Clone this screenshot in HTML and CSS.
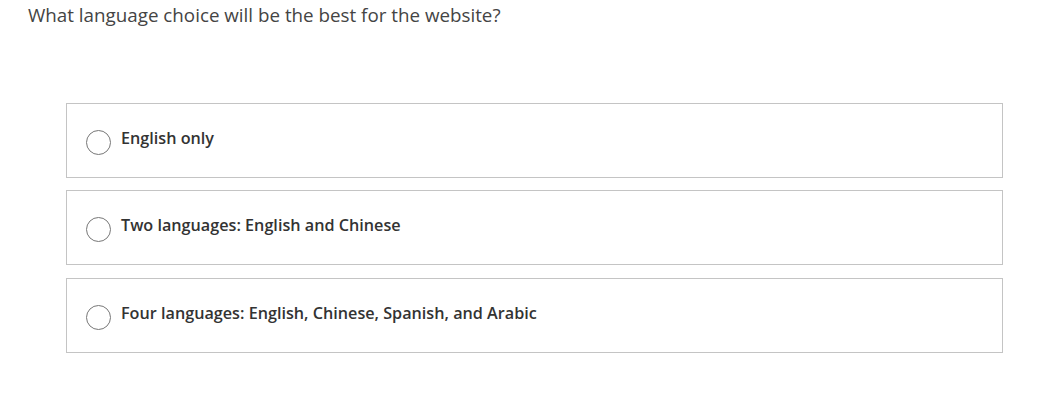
FILE: index.html
```html
<!DOCTYPE html>
<html>
<head>
<meta charset="utf-8">
<link rel="stylesheet" href="styles.css">
</head>
<body>
<div class="question">
  <h1 class="prompt">What language choice will be the best for the website?</h1>
  <div class="options">
    <label class="option"><span class="radio"></span><span class="label">English only</span></label>
    <label class="option"><span class="radio"></span><span class="label">Two languages: English and Chinese</span></label>
    <label class="option"><span class="radio"></span><span class="label">Four languages: English, Chinese, Spanish, and Arabic</span></label>
  </div>
</div>
</body>
</html>
```
FILE: styles.css
```css
html, body {
  margin: 0;
  padding: 0;
  background: #fff;
}
body {
  font-family: "Open Sans", "Liberation Sans", sans-serif;
}
.question {
  padding: 2px 52px 0 28px;
}
.prompt {
  margin: 0;
  font-size: 18.8px;
  font-weight: 400;
  color: #444;
  line-height: 26px;
}
.options {
  margin: 75px 0 0 38px;
  display: flex;
  flex-direction: column;
  gap: 12px;
}
.option {
  display: flex;
  align-items: center;
  height: 73px;
  border: 1px solid #c4c4c4;
  padding: 0 0 0 19px;
  gap: 10px;
}
.option:last-child {
  margin-top: 1px;
}
.radio {
  width: 23px;
  height: 23px;
  border: 1px solid #777;
  border-radius: 50%;
  flex: none;
  margin-top: 3px;
}
.label {
  font-size: 16.2px;
  font-weight: 600;
  color: #333;
  margin-top: -6px;
}
```
